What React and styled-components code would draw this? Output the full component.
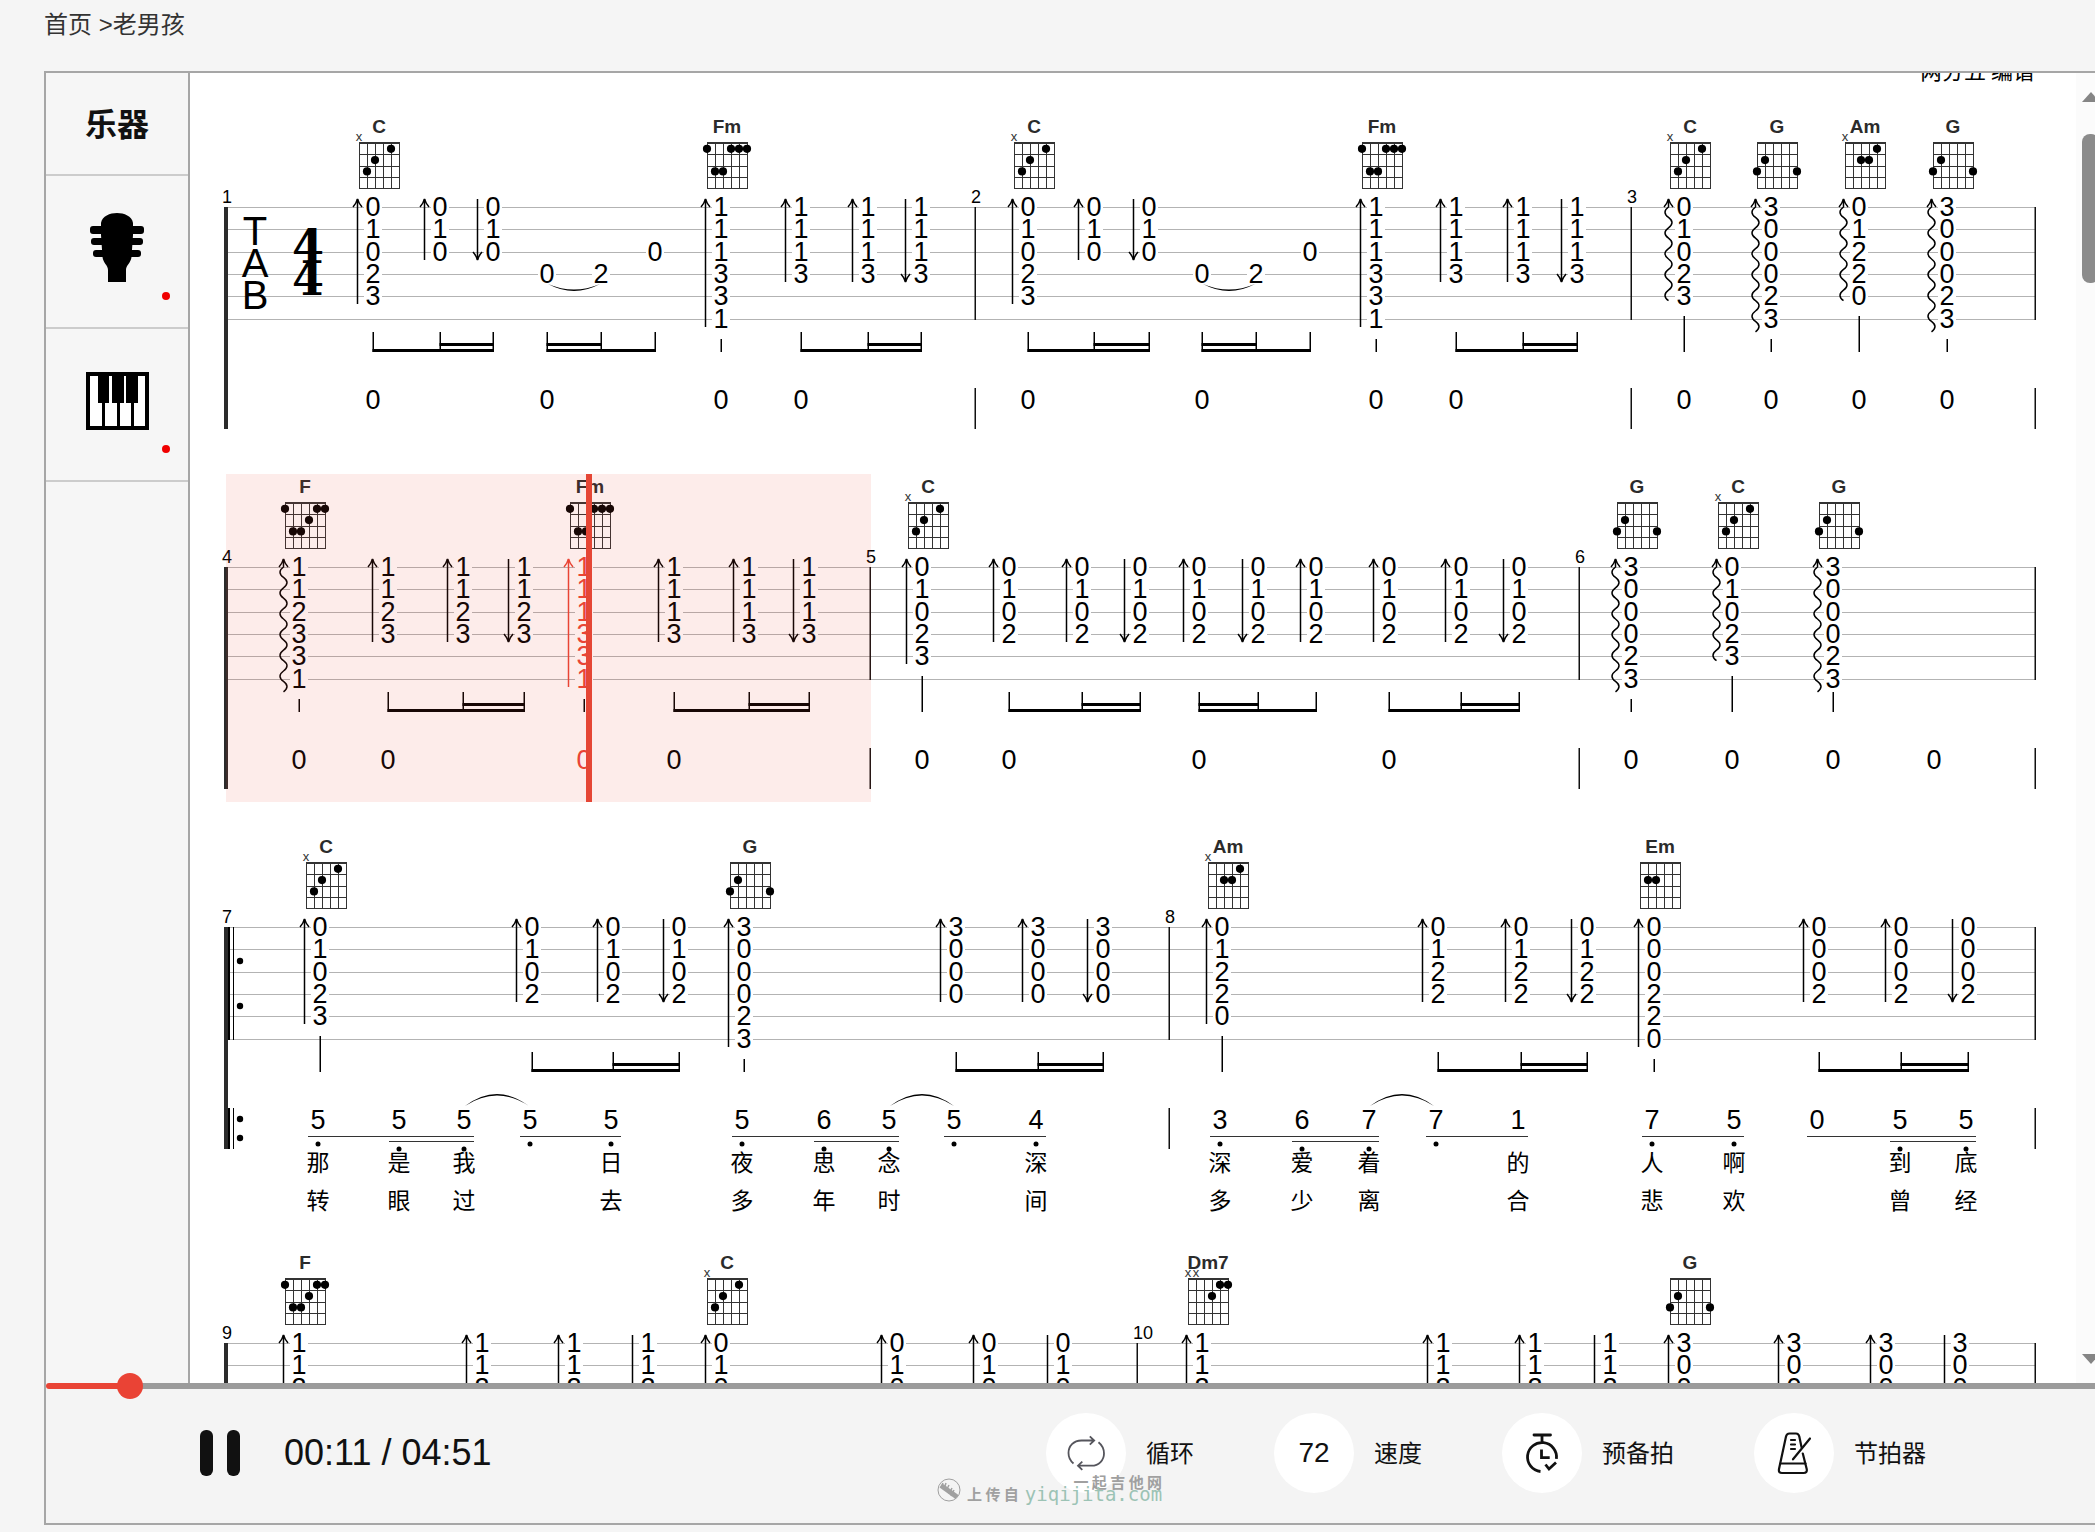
import { useState } from 'react'
import styled, { createGlobalStyle } from 'styled-components'

const colors = {
  page: '#f5f5f5',
  panel: '#f4f4f4',
  line: '#a6a6a6',
  softLine: '#cccccc',
  ink: '#111111',
  text: '#333333',
  red: '#e94435',
}

const fonts = {
  ui: '"Liberation Sans", "Noto Sans CJK SC", sans-serif',
  cjk: '"Noto Sans CJK SC", sans-serif',
  meter: '"DejaVu Serif", serif',
  mono: '"DejaVu Sans Mono", monospace',
}

const GlobalStyle = createGlobalStyle`
  * { box-sizing: border-box; }

  body {
    margin: 0;
    background: ${colors.page};
    color: ${colors.ink};
    font-family: ${fonts.ui};
    overflow: hidden;
  }
`

const Page = styled.div`
  display: flex;
  flex-direction: column;
  height: 100vh;
  padding: 0 0 7px 44px;
`

const Breadcrumb = styled.nav`
  padding: 9px 0 30px;
  font-family: "Liberation Sans", ${fonts.cjk};
  font-size: 24px;
  font-weight: 400;
  line-height: 32px;
  color: ${colors.text};

  a {
    color: inherit;
    text-decoration: none;
  }
`

/* the frame runs a little past the right edge of the window */
const Frame = styled.div`
  flex: 1;
  min-height: 0;
  display: flex;
  flex-direction: column;
  margin-right: -12px;
  border: 2px solid ${colors.line};
`

const Workspace = styled.div`
  flex: 1;
  min-height: 0;
  display: flex;
`

const Sidebar = styled.aside`
  width: 144px;
  flex-shrink: 0;
  background: #f6f6f6;
  border-right: 2px solid ${colors.line};
`

const SidebarTitle = styled.h2`
  margin: 0;
  height: 103px;
  display: flex;
  align-items: center;
  justify-content: center;
  padding-bottom: 4px;
  border-bottom: 2px solid ${colors.softLine};
  font-family: ${fonts.cjk};
  font-size: 32px;
  font-weight: 700;
`

const Instrument = styled.button`
  position: relative;
  display: flex;
  align-items: center;
  justify-content: center;
  width: 100%;
  height: 153px;
  padding: 0 0 8px;
  border: none;
  border-bottom: 2px solid ${colors.softLine};
  background: transparent;
  cursor: pointer;
`

const ActiveDot = styled.span`
  position: absolute;
  right: 18px;
  bottom: 27px;
  width: 8px;
  height: 8px;
  border-radius: 50%;
  background: #f00000;
`

const Score = styled.main`
  flex: 1;
  min-width: 0;
  display: flex;
  flex-direction: column;
  gap: 32px;
  overflow: hidden;
  background: #ffffff;
`

const Credit = styled.p`
  flex-shrink: 0;
  margin: -20px 0 -3px;
  padding-right: 41px;
  font-family: ${fonts.cjk};
  font-size: 22px;
  font-weight: 400;
  line-height: 32px;
  text-align: right;
  color: #000;
`

const SystemSvg = styled.svg`
  display: block;
  width: 100%;
  height: auto;
  flex-shrink: 0;
  overflow: visible;
`

const Digit = styled.text`
  font-family: ${fonts.ui};
  font-size: 27px;
  text-anchor: middle;
  fill: ${({ $active }) => ($active ? colors.red : '#000')};
`

const Clef = styled.text`
  font-family: ${fonts.ui};
  font-size: 40px;
  text-anchor: middle;
`

const Meter = styled.text`
  font-family: ${fonts.meter};
  font-size: 46px;
  font-weight: 700;
  text-anchor: middle;
`

const BarNumber = styled.text`
  font-family: ${fonts.ui};
  font-size: 18px;
`

const ChordName = styled.text`
  font-family: ${fonts.ui};
  font-size: 19px;
  font-weight: 700;
  text-anchor: middle;
  fill: #2b2b2b;
`

const Mute = styled.text`
  font-family: ${fonts.ui};
  font-size: 13px;
  text-anchor: middle;
  fill: #333;
`

const Lyric = styled.text`
  font-family: ${fonts.cjk};
  font-size: 23px;
  text-anchor: middle;
`

const Scrollbar = styled.div`
  width: 29px;
  flex-shrink: 0;
  display: flex;
  flex-direction: column;
  align-items: center;
  padding: 19px 0;
  background: #fbfbfb;
`

const ScrollArrow = styled.div`
  border: 9px solid transparent;
  border-top: ${({ $down }) => ($down ? '10px solid #858585' : 'none')};
  border-bottom: ${({ $down }) => ($down ? 'none' : '10px solid #858585')};
`

const ScrollThumb = styled.div`
  width: 17px;
  height: 149px;
  margin: 32px 0 auto;
  border-radius: 8px;
  background: #8b8b8b;
`

const Progress = styled.input`
  position: relative;
  display: block;
  width: 100%;
  height: 26px;
  margin: -10px 0;
  appearance: none;
  background: transparent;
  cursor: pointer;

  &::-webkit-slider-runnable-track {
    height: 6px;
    border-radius: 3px 0 0 3px;
    background: linear-gradient(to right, ${colors.red} ${({ $played }) => $played}%, #9b9b9b ${({ $played }) => $played}%);
  }

  &::-webkit-slider-thumb {
    appearance: none;
    width: 26px;
    height: 26px;
    margin-top: -10px;
    border-radius: 50%;
    background: #ea4335;
  }
`

const Player = styled.footer`
  position: relative;
  flex-shrink: 0;
  background: ${colors.panel};
`

const Controls = styled.div`
  display: flex;
  align-items: center;
  height: 134px;
  padding: 0 179px 6px 154px;
`

const PauseButton = styled.button`
  display: flex;
  justify-content: space-between;
  width: 40px;
  height: 46px;
  padding: 0;
  border: none;
  background: transparent;
  cursor: pointer;

  span {
    width: 13px;
    height: 46px;
    border-radius: 6px;
    background: ${colors.ink};
  }
`

const Time = styled.div`
  margin-left: 44px;
  font-size: 36px;
  line-height: 44px;
`

const Tools = styled.div`
  display: flex;
  gap: 80px;
  margin-left: auto;
`

const Tool = styled.button`
  display: flex;
  align-items: center;
  gap: 20px;
  padding: 0;
  border: none;
  background: transparent;
  font-family: ${fonts.cjk};
  font-size: 24px;
  font-weight: 400;
  color: ${colors.ink};
  cursor: pointer;
`

const ToolLabel = styled.span`
  padding-bottom: 3px;
  line-height: 32px;
`

const Round = styled.span`
  display: flex;
  align-items: center;
  justify-content: center;
  width: 80px;
  height: 80px;
  border-radius: 50%;
  background: #fff;
  font-family: ${fonts.ui};
  font-size: 28px;
`

const Watermark = styled.div`
  position: absolute;
  left: 891px;
  top: 95px;
  display: grid;
  grid-template-columns: 24px auto auto;
  grid-template-rows: 8px 16px;
  column-gap: 6px;
  font-family: ${fonts.cjk};
  font-size: 15px;
  font-weight: 700;
  line-height: 16px;
  color: #a0a0a0;
  pointer-events: none;

  svg {
    grid-row: 1 / 3;
  }
`

const SiteName = styled.span`
  grid-column: 3;
  line-height: 8px;
  text-align: right;
`

const SiteUrl = styled.span`
  font-family: ${fonts.mono};
  font-size: 19px;
  font-weight: 400;
  color: #9cc3b5;
`

/* ---- score data ---- */

const STAFF = 93
const STRINGS = [0, 22, 45, 67, 89, 112].map((y) => y + STAFF)

// dots: [string from the left, fret]
const CHORDS = {
  C: { mute: [0], dots: [[4, 1], [2, 2], [1, 3]] },
  G: { mute: [], dots: [[1, 2], [0, 3], [5, 3]] },
  Am: { mute: [0], dots: [[4, 1], [2, 2], [3, 2]] },
  Em: { mute: [], dots: [[1, 2], [2, 2]] },
  F: { mute: [], dots: [[0, 1], [4, 1], [5, 1], [3, 2], [1, 3], [2, 3]] },
  Fm: { mute: [], dots: [[0, 1], [3, 1], [4, 1], [5, 1], [1, 3], [2, 3]] },
  Dm7: { mute: [0, 1], dots: [[4, 1], [5, 1], [3, 2]] },
}

// note: [x, frets from the first string down, stroke]
const SYSTEMS = [
  {
    height: 328,
    clef: true,
    bars: [749, 1405, 1809],
    numbers: [[0, 1], [749, 2], [1405, 3]],
    chords: [[147, 'C'], [495, 'Fm'], [802, 'C'], [1150, 'Fm'], [1458, 'C'], [1545, 'G'], [1633, 'Am'], [1721, 'G']],
    notes: [
      [147, '01023', 'up'], [214, '010', 'up'], [267, '010', 'down'],
      [321, '---0'], [375, '---2'], [429, '--0'],
      [495, '111331', 'up'], [575, '1113', 'up'], [642, '1113', 'up'], [695, '1113', 'down'],
      [802, '01023', 'up'], [868, '010', 'up'], [923, '010', 'down'],
      [976, '---0'], [1030, '---2'], [1084, '--0'],
      [1150, '111331', 'up'], [1230, '1113', 'up'], [1297, '1113', 'up'], [1351, '1113', 'down'],
      [1458, '01023', 'wave'], [1545, '300023', 'wave'], [1633, '01220', 'wave'], [1721, '300023', 'wave'],
    ],
    stems: [[495, 132], [1150, 132], [1458, 109], [1545, 132], [1633, 109], [1721, 132]],
    beams: [
      [[147, 214, 267], [214, 267]], [[321, 375, 429], [321, 375]], [[575, 642, 695], [642, 695]],
      [[802, 868, 923], [868, 923]], [[976, 1030, 1084], [976, 1030]], [[1230, 1297, 1351], [1297, 1351]],
    ],
    ties: [[322, 374], [977, 1029]],
    melody: [147, 321, 495, 575, 802, 976, 1150, 1230, 1458, 1545, 1633, 1721].map((x) => ({ x, n: 0 })),
  },
  {
    height: 328,
    bars: [644, 1353, 1809],
    numbers: [[0, 4], [644, 5], [1353, 6]],
    chords: [[73, 'F'], [358, 'Fm'], [696, 'C'], [1405, 'G'], [1506, 'C'], [1607, 'G']],
    notes: [
      [73, '112331', 'wave'], [162, '1123', 'up'], [237, '1123', 'up'], [298, '1123', 'down'],
      [358, '111331', 'up', true], [448, '1113', 'up'], [523, '1113', 'up'], [583, '1113', 'down'],
      [696, '01023', 'up'], [783, '0102', 'up'], [856, '0102', 'up'], [914, '0102', 'down'],
      [973, '0102', 'up'], [1032, '0102', 'down'], [1090, '0102', 'up'],
      [1163, '0102', 'up'], [1235, '0102', 'up'], [1293, '0102', 'down'],
      [1405, '300023', 'wave'], [1506, '01023', 'wave'], [1607, '300023', 'wave'],
    ],
    stems: [[73, 132], [358, 132], [696, 109], [1405, 132], [1506, 109], [1607, 125]],
    beams: [
      [[162, 237, 298], [237, 298]], [[448, 523, 583], [523, 583]], [[783, 856, 914], [856, 914]],
      [[973, 1032, 1090], [973, 1032]], [[1163, 1235, 1293], [1235, 1293]],
    ],
    melody: [73, 162, 358, 448, 696, 783, 973, 1163, 1405, 1506, 1607, 1708].map((x) => ({ x, n: 0, active: x === 358 })),
    playing: { from: 0, to: 645, head: 363 },
  },
  {
    height: 384,
    repeat: true,
    bars: [943, 1809],
    numbers: [[0, 7], [943, 8]],
    chords: [[94, 'C'], [518, 'G'], [996, 'Am'], [1428, 'Em']],
    notes: [
      [94, '01023', 'up'], [306, '0102', 'up'], [387, '0102', 'up'], [453, '0102', 'down'],
      [518, '300023', 'up'], [730, '3000', 'up'], [812, '3000', 'up'], [877, '3000', 'down'],
      [996, '01220', 'up'], [1212, '0122', 'up'], [1295, '0122', 'up'], [1361, '0122', 'down'],
      [1428, '000220', 'up'], [1593, '0002', 'up'], [1675, '0002', 'up'], [1742, '0002', 'down'],
    ],
    stems: [[94, 109], [518, 132], [996, 109], [1428, 132]],
    beams: [
      [[306, 387, 453], [387, 453]], [[730, 812, 877], [812, 877]],
      [[1212, 1295, 1361], [1295, 1361]], [[1593, 1675, 1742], [1675, 1742]],
    ],
    slurs: [[239, 303], [664, 728], [1144, 1208]],
    rules: [
      [92, 238, 209], [173, 238, 214], [304, 385, 209],
      [516, 663, 209], [598, 663, 214], [728, 810, 209],
      [994, 1143, 209], [1076, 1143, 214], [1210, 1292, 209],
      [1426, 1508, 209], [1591, 1740, 209], [1674, 1740, 214],
    ],
    melody: [
      { x: 92, n: 5, dot: 217, words: '那转' }, { x: 173, n: 5, dot: 222, words: '是眼' },
      { x: 238, n: 5, dot: 222, words: '我过' }, { x: 304, n: 5, dot: 217 }, { x: 385, n: 5, dot: 217, words: '日去' },
      { x: 516, n: 5, dot: 217, words: '夜多' }, { x: 598, n: 6, dot: 222, words: '思年' },
      { x: 663, n: 5, dot: 222, words: '念时' }, { x: 728, n: 5, dot: 217 }, { x: 810, n: 4, dot: 217, words: '深间' },
      { x: 994, n: 3, dot: 217, words: '深多' }, { x: 1076, n: 6, dot: 222, words: '爱少' },
      { x: 1143, n: 7, dot: 222, words: '着离' }, { x: 1210, n: 7, dot: 217 }, { x: 1292, n: 1, words: '的合' },
      { x: 1426, n: 7, dot: 217, words: '人悲' }, { x: 1508, n: 5, dot: 217, words: '啊欢' },
      { x: 1591, n: 0 }, { x: 1674, n: 5, dot: 222, words: '到曾' }, { x: 1740, n: 5, dot: 222, words: '底经' },
    ],
  },
  {
    height: 328,
    bars: [911, 1809],
    numbers: [[0, 9], [911, 10]],
    chords: [[73, 'F'], [495, 'C'], [976, 'Dm7'], [1458, 'G']],
    notes: [
      [73, '112331', 'up'], [256, '1123', 'up'], [348, '1123', 'up'], [422, '1123', 'down'],
      [495, '01023', 'up'], [671, '0102', 'up'], [763, '0102', 'up'], [837, '0102', 'down'],
      [976, '1120', 'up'], [1217, '1120', 'up'], [1309, '1120', 'up'], [1384, '1120', 'down'],
      [1458, '300023', 'up'], [1568, '3000', 'up'], [1660, '3000', 'up'], [1734, '3000', 'down'],
    ],
    stems: [],
    beams: [],
    melody: [],
  },
]

/* ---- score drawing ---- */

function ChordBox({ x, name }) {
  const left = x - 14
  const { mute, dots } = CHORDS[name]
  return (
    <g>
      <ChordName x={x + 6} y="19">{name}</ChordName>
      {mute.map((s) => <Mute key={s} x={left + s * 8} y="27">x</Mute>)}
      <g stroke="#333" strokeWidth="1" shapeRendering="crispEdges">
        {[0, 8, 16, 24, 32, 40].map((dx) => <line key={dx} x1={left + dx} x2={left + dx} y1="28" y2="75" />)}
        {[29, 40, 52, 63, 74].map((y) => (
          <line key={y} x1={left} x2={left + 41} y1={y} y2={y} strokeWidth={y === 29 ? 2 : 1} />
        ))}
      </g>
      {dots.map(([s, f]) => <circle key={`${s}-${f}`} cx={left + s * 8} cy={23.5 + f * 11.3} r="4.1" />)}
    </g>
  )
}

function Stroke({ x, kind, last, active }) {
  const top = STAFF - 8
  const bottom = STRINGS[last] + 8
  const color = active ? colors.red : '#000'
  let shape
  if (kind === 'wave') {
    const turns = last === 5 ? 12 : 9
    let d = `M${x} ${STAFF - 8}V${STAFF}`
    for (let i = 0; i < turns; i++) d += `q${i % 2 ? 7 : -7} 5.2 0 10.4`
    shape = <path d={d} />
  } else {
    shape = <path d={`M${x} ${top}V${bottom}`} />
  }
  return (
    <g fill="none" stroke={color} strokeWidth="1.5">
      {shape}
      {kind === 'down'
        ? <path d={`M${x - 4.5} ${bottom - 8}Q${x - 1} ${bottom - 4} ${x} ${bottom}Q${x + 1} ${bottom - 4} ${x + 4.5} ${bottom - 8}`} />
        : <path d={`M${x - 4.5} ${top + 8}Q${x - 1} ${top + 4} ${x} ${top}Q${x + 1} ${top + 4} ${x + 4.5} ${top + 8}`} />}
    </g>
  )
}

function Note({ x, frets, stroke, active }) {
  return (
    <g>
      {[...frets].map((fret, i) => fret !== '-' && (
        <g key={i}>
          <rect x={x - 9} y={STRINGS[i] - 9} width="18" height="18" fill="#fff" />
          <Digit x={x} y={STRINGS[i] + 9} $active={active}>{fret}</Digit>
        </g>
      ))}
      {stroke && <Stroke x={x - 15.5} kind={stroke} last={frets.length - 1} active={active} />}
    </g>
  )
}

function Arc({ from, to, y, rise }) {
  const mid = (from + to) / 2
  const outer = y - rise * 2
  const inner = outer + (rise > 0 ? 3 : -3)
  return <path d={`M${from} ${y}Q${mid} ${outer} ${to} ${y}Q${mid} ${inner} ${from} ${y}Z`} />
}

function Beam({ group: [xs, sub] }) {
  const y = STAFF + 125
  return (
    <g>
      {xs.map((x) => <rect key={x} x={x - 0.5} y={y} width="1.5" height="20" />)}
      <rect x={xs[0] - 0.5} y={y + 17} width={xs[xs.length - 1] - xs[0] + 1.5} height="3" />
      <rect x={sub[0] - 0.5} y={y + 11} width={sub[1] - sub[0] + 1.5} height="3" />
    </g>
  )
}

function RepeatSign() {
  return (
    <g>
      {[[0, 113], [181, 41]].map(([y, h]) => (
        <g key={y} shapeRendering="crispEdges">
          <rect x="2" y={STAFF + y} width="2" height={h} />
          <rect x="7" y={STAFF + y} width="1" height={h} />
        </g>
      ))}
      {[34, 79, 192, 211].map((y) => <circle key={y} cx="14" cy={STAFF + y} r="3.2" />)}
    </g>
  )
}

function System({ data }) {
  const { height, clef, repeat, bars, numbers, chords, notes, stems, beams, ties = [], slurs = [], rules = [], melody, playing } = data
  return (
    <SystemSvg viewBox={`-36 0 1886 ${height}`}>
      <g shapeRendering="crispEdges">
        {STRINGS.map((y) => <rect key={y} x="0" y={y} width="1809" height="1" fill="#b3b3b3" />)}
        <rect x="-2" y={STAFF} width="4" height="222" fill="#2b2b2b" />
      </g>
      {bars.map((x) => (
        <g key={x} fill="#111">
          <rect x={x - 0.5} y={STAFF} width="1.5" height="113" />
          <rect x={x - 0.5} y={STAFF + 181} width="1.5" height="41" />
        </g>
      ))}
      {repeat && <RepeatSign />}
      {clef && (
        <g>
          <Clef x="29" y="131">T</Clef>
          <Clef x="29" y="163">A</Clef>
          <Clef x="29" y="195">B</Clef>
          <Meter x="82" y="149">4</Meter>
          <Meter x="82" y="181">4</Meter>
        </g>
      )}
      {numbers.map(([x, n]) => <BarNumber key={n} x={x - 4} y="89">{n}</BarNumber>)}
      {chords.map(([x, name]) => <ChordBox key={x} x={x} name={name} />)}
      {notes.map(([x, frets, stroke, active]) => (
        <Note key={x} x={x} frets={frets} stroke={stroke} active={active} />
      ))}
      {stems.map(([x, y]) => (
        <rect key={x} x={x - 0.5} y={STAFF + y} width="1.5" height={145 - y} />
      ))}
      {beams.map((group) => <Beam key={group[0][0]} group={group} />)}
      {ties.map(([from, to]) => <Arc key={from} from={from} to={to} y={STAFF + 77} rise={-7} />)}
      {slurs.map(([from, to]) => <Arc key={from} from={from} to={to} y={STAFF + 179} rise={12} />)}
      {rules.map(([from, to, y]) => (
        <rect key={`${from}-${y}`} x={from - 10} y={STAFF + y} width={to - from + 20} height="1" fill="#333" shapeRendering="crispEdges" />
      ))}
      {melody.map(({ x, n, dot, words, active }) => (
        <g key={x}>
          <Digit x={x} y={STAFF + 202} $active={active}>{n}</Digit>
          {dot && <circle cx={x} cy={STAFF + dot} r="2.5" />}
          {words && [...words].map((word, i) => (
            <Lyric key={i} x={x} y={STAFF + 244 + i * 38}>{word}</Lyric>
          ))}
        </g>
      ))}
      {playing && (
        <g>
          <rect x={playing.from} y="0" width={playing.to - playing.from} height={height} fill="rgba(234,67,53,0.1)" />
          <rect x={playing.head - 3} y="0" width="6" height={height} fill="#e54635" />
        </g>
      )}
    </SystemSvg>
  )
}

/* ---- icons ---- */

const GuitarIcon = () => (
  <svg width="54" height="69" viewBox="0 0 54 69" aria-hidden="true">
    <path d="M11 10C12 3 20 0 27 0s15 3 16 10v12l-1.500 22c-.5 6-5.500 8-5.500 13v12H18V57c0-5-5-7-5.500-13L11 22Z" />
    <rect x="0" y="13" width="54" height="8" rx="3" />
    <rect x="1" y="25" width="52" height="7" rx="3" />
    <rect x="3" y="37" width="48" height="7" rx="3" />
  </svg>
)

const PianoIcon = () => (
  <svg width="63" height="58" viewBox="0 0 63 58" aria-hidden="true">
    <rect x="2" y="2" width="59" height="54" fill="#fff" stroke="#000" strokeWidth="4" />
    <path d="M12 2h11v29H12zM26 2h12v29H26zM40 2h12v29H40zM16 30h3v26h-3zM31 30h3v26h-3zM45 30h3v26h-3z" />
  </svg>
)

const LoopIcon = () => (
  <svg width="80" height="80" viewBox="0 0 80 80" fill="none" stroke="#55555c" strokeWidth="1.8" aria-hidden="true">
    <path d="M48 27.500H35.500C27.500 27.500 22.500 33 22.500 40c0 4.500 2 8 5 10.500M43.800 23.300l4.400 4.200-4.400 4.200" />
    <path d="M32.500 52.700H45.500C53 52.700 58 47 58 40.500c0-4.500-2-8.500-5.500-11.300M36.300 48.600l-4.300 4.100 4.300 4.200" />
  </svg>
)

const TimerIcon = () => (
  <svg width="80" height="80" viewBox="0 0 80 80" fill="none" stroke="#111" strokeWidth="2.800" aria-hidden="true">
    <path d="M32 22h16.500" strokeLinecap="round" />
    <path d="M40 22v7.500M38.500 58.500A14.500 14.500 0 1 1 54.400 45.800" />
    <path d="M39.500 36.500v8.200h8.200M43.500 51.500l3.500 4.500 7-6.500" />
  </svg>
)

const MetronomeIcon = () => (
  <svg width="80" height="80" viewBox="0 0 80 80" fill="none" stroke="#111" strokeWidth="2.200" strokeLinecap="round" aria-hidden="true">
    <path d="M47.500 34 45.300 23.500Q44.600 20.500 42 20.500H35.500Q32.700 20.500 32 23.500L25 56Q24.300 60 28 60H49.500Q53.500 60 52.700 56L48.800 40.500" />
    <path d="M26.500 50.500h25M39 46.300 56 25.500M37 27h4M37 31.500h4M37 36h4" />
  </svg>
)

const WatermarkLogo = () => (
  <svg width="24" height="24" viewBox="0 0 24 24" fill="none" stroke="#a0a0a0" aria-hidden="true">
    <circle cx="12" cy="12" r="11" />
    <path d="M4 7.500 20 19" strokeWidth="5" />
    <path d="M6 5l-2 4M9 5l-2 6M12 7l-3 6M15 10l-3 6M17 12l-3 6" strokeWidth="1.500" />
  </svg>
)

const DURATION = 291

export default function App() {
  const [position, setPosition] = useState(10.2)
  const [instrument, setInstrument] = useState('guitar')

  return (
    <Page>
      <GlobalStyle />
      <Breadcrumb>
        <a href="#home">首页</a> &gt;<a href="#song">老男孩</a>
      </Breadcrumb>

      <Frame>
        <Workspace>
          <Sidebar>
            <SidebarTitle>乐器</SidebarTitle>
            <Instrument type="button" aria-label="吉他" aria-pressed={instrument === 'guitar'} onClick={() => setInstrument('guitar')}>
              <GuitarIcon />
              <ActiveDot />
            </Instrument>
            <Instrument type="button" aria-label="钢琴" aria-pressed={instrument === 'piano'} onClick={() => setInstrument('piano')}>
              <PianoIcon />
              <ActiveDot />
            </Instrument>
          </Sidebar>

          <Score>
            <Credit>两分五 编谱</Credit>
            {SYSTEMS.map((data) => <System key={data.numbers[0][1]} data={data} />)}
          </Score>

          <Scrollbar>
            <ScrollArrow />
            <ScrollThumb />
            <ScrollArrow $down />
          </Scrollbar>
        </Workspace>

        <Player>
          <Progress
            type="range"
            aria-label="播放进度"
            min="0"
            max={DURATION}
            step="0.1"
            value={position}
            $played={(position / DURATION) * 100}
            onChange={(e) => setPosition(Number(e.target.value))}
          />
          <Controls>
            <PauseButton type="button" aria-label="暂停"><span /><span /></PauseButton>
            <Time>00:11 / 04:51</Time>
            <Tools>
              <Tool type="button"><Round><LoopIcon /></Round><ToolLabel>循环</ToolLabel></Tool>
              <Tool type="button"><Round>72</Round><ToolLabel>速度</ToolLabel></Tool>
              <Tool type="button"><Round><TimerIcon /></Round><ToolLabel>预备拍</ToolLabel></Tool>
              <Tool type="button"><Round><MetronomeIcon /></Round><ToolLabel>节拍器</ToolLabel></Tool>
            </Tools>
          </Controls>
          <Watermark>
            <WatermarkLogo />
            <SiteName>一 起 吉 他 网</SiteName>
            <span>上 传 自</span>
            <SiteUrl>yiqijita.com</SiteUrl>
          </Watermark>
        </Player>
      </Frame>
    </Page>
  )
}
